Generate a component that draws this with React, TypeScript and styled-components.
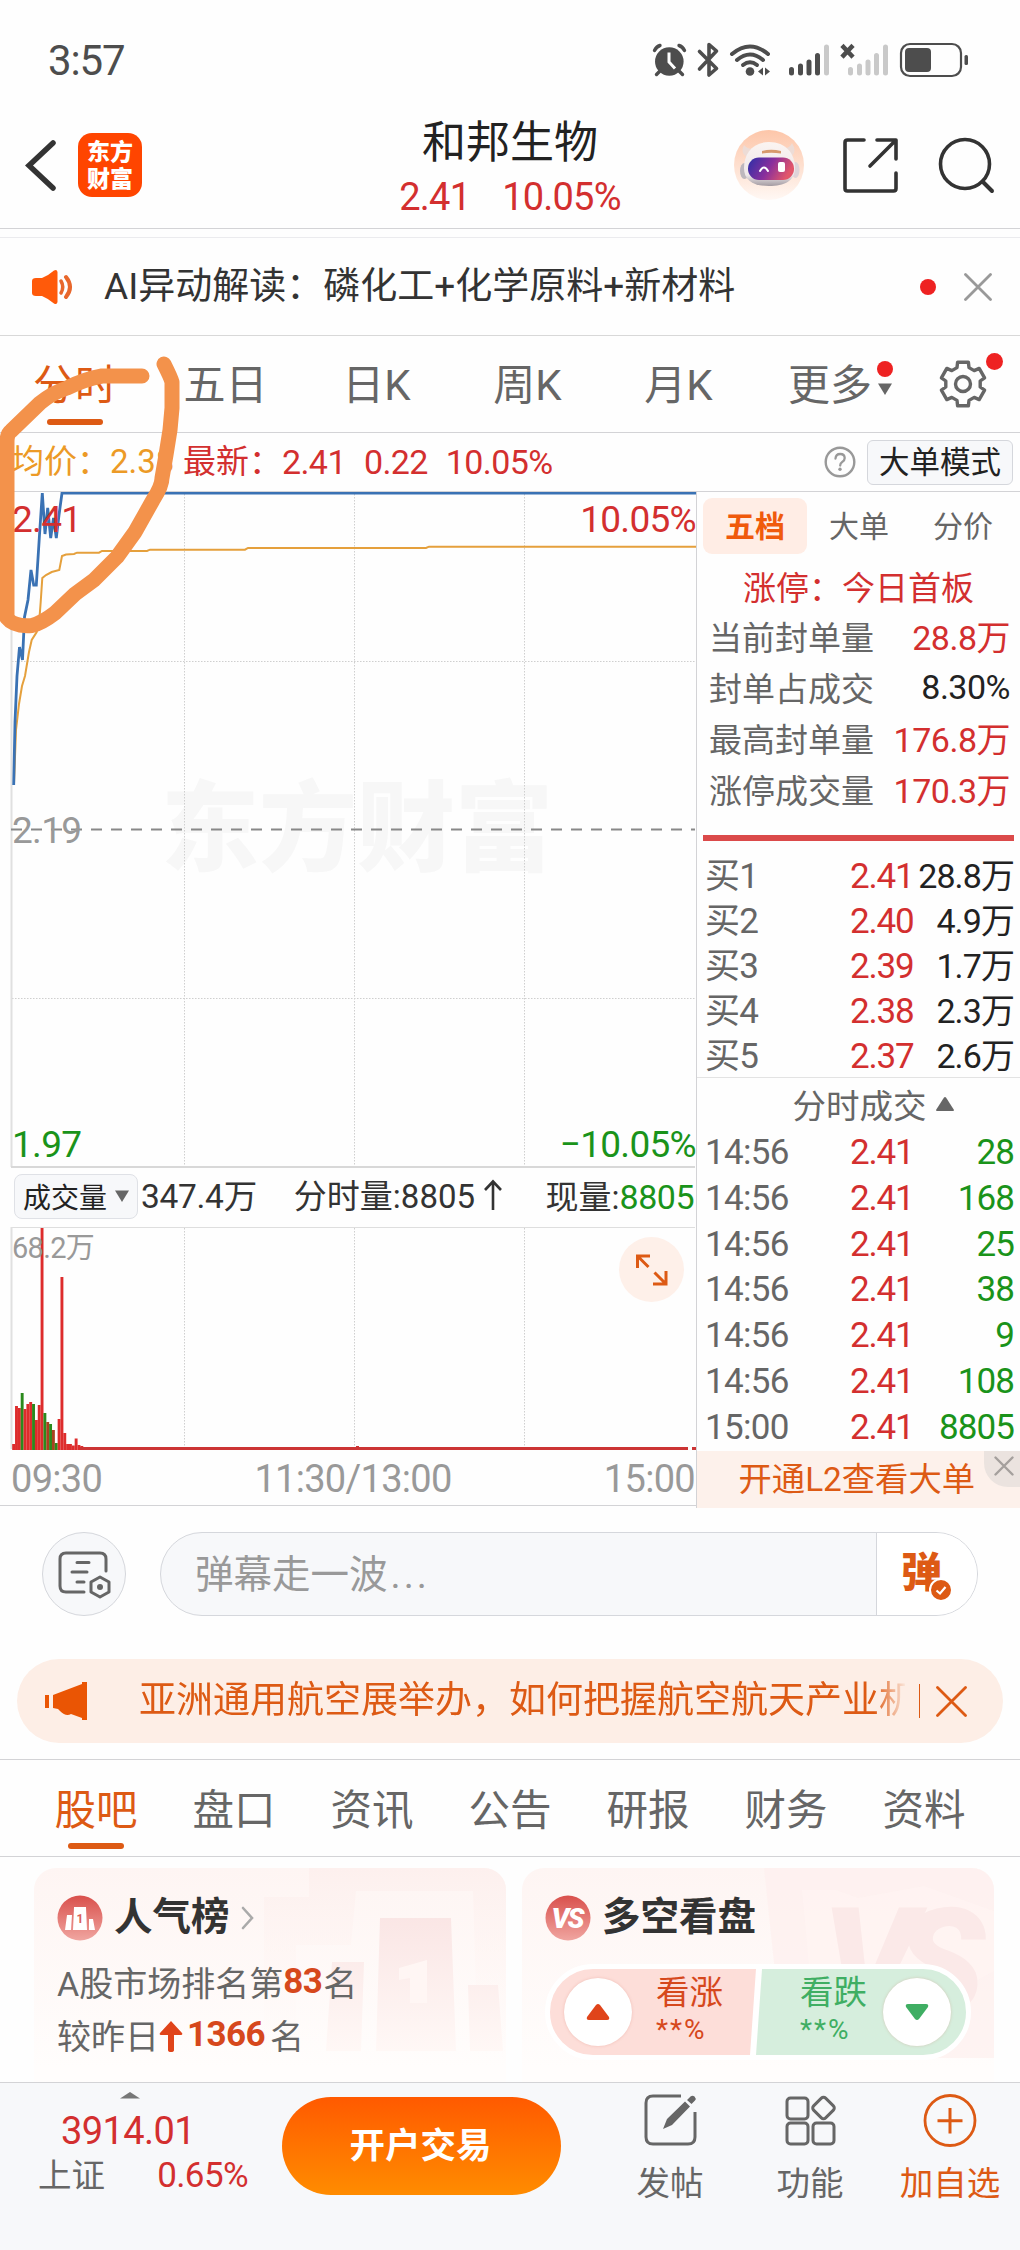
import React from "react";
import styled, { createGlobalStyle } from "styled-components";

const RED = "#d32f2f";
const GREEN = "#1a931a";
const GREY = "#666";
const ORANGE = "#dd5a14";

const Global = createGlobalStyle`
  *, *::before, *::after { box-sizing: border-box; }
  body { margin: 0; background: #fff; }
  body, button, input { font-family: Roboto, "Noto Sans CJK SC", sans-serif; }
  svg { display: block; flex: none; }
`;

const Screen = styled.div`
  width: 1020px;
  height: 2250px;
  display: flex;
  flex-direction: column;
  background: #fefefe;
  color: #333;
  overflow: hidden;
  position: relative;
  white-space: nowrap;
`;

const Txt = styled.span<{ $s: number; $c?: string; $w?: number; $ls?: number }>`
  font-size: ${(p) => p.$s}px;
  line-height: 1.2;
  color: ${(p) => p.$c ?? "inherit"};
  font-weight: ${(p) => p.$w ?? 400};
  letter-spacing: ${(p) => p.$ls ?? 0}px;
  white-space: pre;
`;

/* ---------- status bar ---------- */
const StatusBar = styled.div`
  height: 103px;
  padding: 19px 49px 0 48px;
  display: flex;
  align-items: center;
  justify-content: space-between;
`;
const StatusSvg = styled.svg`
  margin-right: -10px;
`;

const StatusIcons = () => (
  <StatusSvg width="330" height="40" viewBox="650 40 330 40">
    <g fill="#4d4d4d" stroke="none">
      <circle cx="668.3" cy="60.5" r="14.3" />
      <path d="M668 51.5v9.5l6 6.5" fill="none" stroke="#fff" strokeWidth="3" />
      <path
        d="M653.5 49.5q2-4 5.5-5M683.5 49.5q-2-4-5.5-5M659 70l-3.5 3.5M678 70l3.5 3.5"
        fill="none"
        stroke="#4d4d4d"
        strokeWidth="3.4"
        strokeLinecap="round"
      />
      <path d="M698.5 50.500l17 17-7.500 6.500V43.500l7.500 6.500-17 18" fill="none" stroke="#4d4d4d" strokeWidth="3.6" strokeLinejoin="round" strokeLinecap="round" />
      <g fill="none" stroke="#4d4d4d" strokeWidth="4" strokeLinecap="round">
        <path d="M731 53q18-15 36 0" />
        <path d="M736 59q13-11 26 0" />
        <path d="M742 64q7-5.500 14 0" />
      </g>
      <circle cx="749" cy="70.500" r="4.300" />
      <path d="M757 70.500l5-4v8zM769 70.500l-5-4v8z" />
      <g stroke="#4d4d4d" strokeWidth="5" strokeLinecap="round">
        <path d="M790.500 68.500v3.500M799.500 65v7M808 61v11M816.500 54.500v17.500" />
        <path stroke="#c9c9c9" d="M825.500 46v26M849.500 68.500v3.500M858.500 65v7M867 61v11M875.500 54.500v17.500M884.500 46v26" />
      </g>
      <path d="M842.500 46l8 8.500M850.500 46l-8 8.500" stroke="#4d4d4d" strokeWidth="4.500" strokeLinecap="square" />
      <rect x="900" y="43" width="60" height="32" rx="9" fill="none" stroke="#4d4d4d" strokeWidth="2.200" />
      <rect x="904" y="47" width="26" height="24" rx="4" />
      <rect x="963.500" y="54" width="3.500" height="10" rx="1.500" />
    </g>
  </StatusSvg>
);

/* ---------- header ---------- */
const Header = styled.header`
  height: 126px;
  border-bottom: 1px solid #d3d3d6;
  display: grid;
  grid-template-columns: 340px 1fr 340px;
`;
const HeaderLeft = styled.div`
  display: flex;
  align-items: flex-start;
  padding: 30px 0 0 25px;
  gap: 21px;
  & > svg { margin-top: 6px; }
`;
const Logo = styled.div`
  width: 64px;
  height: 64px;
  border-radius: 14px;
  background: #ff4500;
  color: #fff;
  font-weight: 900;
  font-size: 23px;
  line-height: 27px;
  text-align: center;
  padding: 6px 0 0;
  white-space: pre-line;
`;
const TitleBlock = styled.div`
  display: flex;
  flex-direction: column;
  align-items: center;
  padding-top: 13px;
  h1 { margin: 0; font-size: 44px; line-height: 54px; font-weight: 400; color: #222; }
`;
const Quote = styled.div`
  display: flex;
  gap: 32px;
  font-size: 38px;
  letter-spacing: -0.8px;
  line-height: 54px;
  color: ${RED};
`;
const HeaderRight = styled.div`
  display: flex;
  align-items: flex-start;
  justify-content: flex-end;
  padding: 26px 25px 0 0;
`;
const ShareIcon = styled.svg`
  margin: 8px 0 0 37px;
`;

const Robot = () => (
  <svg width="72" height="72" viewBox="0 0 72 72">
    <defs>
      <linearGradient id="av" x1="0" y1="0" x2="0" y2="1">
        <stop offset="0" stopColor="#fdc6a9" />
        <stop offset="1" stopColor="#fff8f4" />
      </linearGradient>
      <linearGradient id="vis" x1="0" y1="0" x2="1" y2="0.3">
        <stop offset="0" stopColor="#2b2fa8" />
        <stop offset="0.55" stopColor="#8a2f9c" />
        <stop offset="1" stopColor="#e2566a" />
      </linearGradient>
      <linearGradient id="helm" x1="0" y1="0" x2="0" y2="1">
        <stop offset="0" stopColor="#fbf4f1" />
        <stop offset="0.75" stopColor="#eee8ea" />
        <stop offset="1" stopColor="#a39ba2" />
      </linearGradient>
    </defs>
    <circle cx="36" cy="36" r="35" fill="url(#av)" />
    <ellipse cx="11.5" cy="42" rx="4.5" ry="8" fill="#bdb7bd" />
    <ellipse cx="62.5" cy="41" rx="4" ry="8" fill="#ded3d8" />
    <path d="M11 16q-4 8 3 12l6-8q-6 0-9-4zM59 14q5 8 0 13l-7-8q5 0 7-5z" fill="#eddcd6" />
    <path d="M36 13c17 0 26 12 26 26 0 13-11 18-26 18S11 52 11 39c0-14 8-26 25-26z" fill="url(#helm)" />
    <rect x="15" y="28.500" width="46" height="22.500" rx="11" fill="url(#vis)" />
    <path d="M29 22q9-2.500 19 0v2.500q-10-1.500-19 0z" fill="#d79a6d" />
    <path d="M27 42q4-7 8 0" stroke="#fff" strokeWidth="2" fill="none" strokeLinecap="round" />
    <rect x="45" y="33" width="7" height="10" rx="2" fill="#fff" />
  </svg>
);

/* ---------- AI notice ---------- */
const AiBar = styled.div`
  margin-top: 8px;
  height: 99px;
  border-top: 1px solid #ebebee;
  border-bottom: 1px solid #d8d8d8;
  display: flex;
  align-items: center;
  padding: 0 28px 0 31px;
`;
const AiText = styled.div`
  flex: 1;
  padding: 1px 0 0 30px;
  font-size: 37px;
  line-height: 46px;
`;
const RedDot = styled.i<{ $d: number; $mr?: number; $mt?: number }>`
  width: ${(p) => p.$d}px;
  height: ${(p) => p.$d}px;
  margin: ${(p) => p.$mt ?? 0}px ${(p) => p.$mr ?? 0}px 0 0;
  border-radius: 50%;
  background: #ee2222;
`;

/* ---------- period tabs ---------- */
const PeriodTabs = styled.nav`
  height: 97px;
  border-bottom: 1px solid #d3d3d6;
  display: flex;
  align-items: stretch;
  color: ${GREY};
  font-size: 42px;
`;
const PeriodTab = styled.div<{ $w: number; $on?: boolean }>`
  width: ${(p) => p.$w}px;
  display: flex;
  flex-direction: column;
  align-items: center;
  line-height: 56px;
  padding-top: 22px;
  color: ${(p) => (p.$on ? ORANGE : "inherit")};
  &::after {
    content: "";
    width: 56px;
    height: 6px;
    border-radius: 3px;
    margin-top: 5px;
    background: ${(p) => (p.$on ? ORANGE : "transparent")};
  }
`;
const MoreTab = styled.div`
  display: flex;
  padding: 22px 0 0 34px;
  line-height: 56px;
`;
const MoreMark = styled.div`
  display: flex;
  flex-direction: column;
  align-items: center;
  gap: 6px;
  margin: -3px 0 0 5px;
`;
const GearBox = styled.div`
  padding: 23px 0 0 45px;
  position: relative;
  & > i { position: absolute; top: 17px; right: -15px; }
`;

const gearPoints = () => {
  const pts: string[] = [];
  for (let k = 0; k < 6; k++) {
    const a = -90 + k * 60;
    const seq: [number, number][] = [
      [a - 20, 17.5],
      [a - 14, 22.5],
      [a + 14, 22.5],
      [a + 20, 17.5],
    ];
    seq.forEach(([d, r]) => {
      const t = (d * Math.PI) / 180;
      pts.push(`${(25 + r * Math.cos(t)).toFixed(1)},${(25 + r * Math.sin(t)).toFixed(1)}`);
    });
  }
  return pts.join(" ");
};

/* ---------- price line ---------- */
const InfoRow = styled.div`
  height: 59px;
  border-bottom: 1px solid #d3d3d6;
  display: flex;
  align-items: center;
  padding: 0 7px 0 11px;
  font-size: 33px;
  line-height: 50px;
`;
const AvgPrice = styled.div`
  width: 172px;
  color: #ec9a26;
`;
const Latest = styled.div`
  flex: 1;
  display: flex;
  gap: 18px;
  color: ${RED};
  font-size: 34px;
  letter-spacing: -0.6px;
  & > span:first-child { font-size: 33px; letter-spacing: 0; margin-right: -18px; width: 99px; }
`;
const ModeButton = styled.button`
  width: 146px;
  height: 45px;
  margin-left: 11px;
  padding: 0;
  border: 1px solid #d5d7dc;
  border-radius: 6px;
  background: #f7f8fa;
  color: #222;
  font-size: 30.5px;
  line-height: 43px;
`;

/* ---------- market area ---------- */
const Market = styled.section`
  height: 1014px;
  display: grid;
  grid-template-columns: 697px 323px;
  border-bottom: 1px solid #d3d3d6;
`;
const ChartColumn = styled.div`
  border-right: 1px solid #d3d3d6;
  display: flex;
  flex-direction: column;
`;
const ChartBox = styled.div<{ $h: number }>`
  position: relative;
  height: ${(p) => p.$h}px;
`;
const Layer = styled.svg`
  position: absolute;
  left: 0;
  top: 0;
`;
const Label = styled.span<{ $top: number; $c: string; $right?: boolean; $s?: number }>`
  position: absolute;
  top: ${(p) => p.$top}px;
  ${(p) => (p.$right ? "right: 0;" : "left: 12px;")}
  font-size: ${(p) => p.$s ?? 37}px;
  letter-spacing: -0.7px;
  line-height: 44px;
  color: ${(p) => p.$c};
`;
const Watermark = styled.span`
  position: absolute;
  left: 161px;
  top: 273px;
  font-size: 98px;
  line-height: 130px;
  font-weight: 900;
  color: #f7f7f7;
`;
const VolumeInfo = styled.div`
  height: 58px;
  display: flex;
  align-items: center;
  font-size: 33px;
  padding: 0 2px 0 14px;
  color: #333;
`;
const VolumePicker = styled.div`
  width: 124px;
  height: 45px;
  border: 1px solid #dfe1e6;
  border-radius: 8px;
  background: #f7f8fa;
  display: flex;
  align-items: center;
  padding: 0 8px 1px 8px;
  justify-content: space-between;
  font-size: 28px;
  color: #222;
  margin: 0 3px 2px 0;
`;
const MinuteVolume = styled.div`
  display: flex;
  align-items: center;
  gap: 8px;
  margin-left: 37px;
  & > svg { margin-bottom: 4px; }
`;
const LastVolume = styled.div`
  margin-left: auto;
`;
const TimeAxis = styled.div`
  flex: 1;
  display: flex;
  align-items: center;
  justify-content: space-between;
  padding: 0 1px 0 11px;
  font-size: 38px;
  letter-spacing: -0.7px;
  color: #999;
`;
const Expand = styled.div`
  position: absolute;
  left: 619px;
  top: 11px;
  width: 65px;
  height: 65px;
  border-radius: 50%;
  background: #fef0e9;
`;

const priceLine =
  "13.7,293 15,230 17,184 19.5,155 22.5,168 24.5,125 28,108 31,78 33.7,93 36.3,93 39.3,46 42.3,1 45,42 47.7,16 50.7,46 53.5,26 56.3,46 59,23 62,1 696,1";
const avgLine =
  "14,292 16,238 19,212 22,194 25,184 29,160 31.7,148 36.7,140 39.3,128 40.7,110 42.3,86 46,83 51.7,80 59.3,78 62,64 66,62.5 74,62 77,60.7 99,60.7 102,59 147,59 150,57.7 245,57.7 248,56 426,56 429,54.7 696,54.7";

const PriceChart = () => (
  <Layer width="696" height="676" viewBox="0 0 696 676">
    <g stroke="#cfcfcf" strokeWidth="1" strokeDasharray="1.5 1.5">
      <path d="M184.5 2v672M354.5 2v672M524.5 2v672M12 169.500h683M12 506.500h683" />
    </g>
    <path d="M11.500 1v674" stroke="#e0e0e0" strokeWidth="2" />
    <path d="M11 675h684" stroke="#d8d8d8" strokeWidth="2" />
    <path d="M11 337.500h684" stroke="#888" strokeWidth="2" strokeDasharray="11 9" />
  </Layer>
);
const PriceLines = () => (
  <Layer width="696" height="676" viewBox="0 0 696 676">
    <polyline points={avgLine} fill="none" stroke="#e5a03c" strokeWidth="2" />
    <polyline points={priceLine} fill="none" stroke="#3a72b4" strokeWidth="2.800" />
  </Layer>
);

const bars: [number, string][] = [
  [6, "r"], [44, "r"], [42, "r"], [57, "g"], [41, "r"], [46, "r"], [48, "r"], [46, "g"], [30, "r"], [45, "r"],
  [222, "r"], [37, "g"], [28, "b"], [26, "g"], [20, "b"], [7, "g"], [31, "r"], [173, "r"], [17, "r"], [6, "r"],
  [6, "r"], [4.5, "r"], [11.5, "r"], [5, "r"], [4, "r"],
];
const fill: Record<string, string> = { r: "#dd2c2c", g: "#2a8a1c", b: "#a8421f" };

const VolumeChart = () => (
  <Layer width="696" height="225" viewBox="0 0 696 225">
    <g stroke="#cfcfcf" strokeDasharray="1.5 1.5">
      <path d="M184.500 2v218M354.500 2v218M524.500 2v218" />
    </g>
    <path d="M11 1.500h684" stroke="#dedede" />
    <path d="M11.500 1v222" stroke="#e0e0e0" strokeWidth="2" />
    {bars.map(([h, c], i) => (
      <rect key={i} x={12.2 + i * 2.84} y={224 - h} width="2.9" height={h} fill={fill[c]} />
    ))}
    <path d="M80 222.500h608M692 222.500h4M356 221.500h3" stroke="#cc3434" strokeWidth="3" />
  </Layer>
);

/* ---------- order book ---------- */
const Book = styled.aside`
  display: flex;
  flex-direction: column;
`;
const BookTabs = styled.div`
  display: grid;
  grid-template-columns: 104px 104px 104px;
  padding: 6px 0 0 6px;
  height: 71px;
`;
const BookTab = styled.div<{ $on?: boolean }>`
  height: 56px;
  border-radius: 9px;
  font-size: 30px;
  line-height: 57px;
  text-align: center;
  background: ${(p) => (p.$on ? "#ffede5" : "none")};
  color: ${(p) => (p.$on ? "#f05a0c" : GREY)};
  font-weight: ${(p) => (p.$on ? 700 : 400)};
`;
const LimitTitle = styled.div`
  color: ${RED};
  font-size: 33px;
  line-height: 50px;
  padding: 1px 0 0 46px;
  margin-bottom: -4px;
`;
const StatRow = styled.div<{ $c: string }>`
  display: flex;
  justify-content: space-between;
  height: 51px;
  align-items: center;
  padding: 0 10px 0 12px;
  font-size: 33px;
  color: ${GREY};
  & > b { font-weight: 400; font-size: 34px; letter-spacing: -0.5px; color: ${(p) => p.$c}; }
`;
const Meter = styled.div`
  height: 6px;
  margin: 21px 6px 13px;
  background: #db4a4a;
`;
const BookRow = styled.div<{ $h: number; $c: string; $s?: number }>`
  display: grid;
  grid-template-columns: 145px 62px 1fr;
  height: ${(p) => p.$h}px;
  line-height: ${(p) => p.$h}px;
  padding: 0 6px 0 8px;
  font-size: 35px;
  letter-spacing: -0.7px;
  color: ${GREY};
  & > :nth-child(2) { color: ${RED}; letter-spacing: -1.2px; }
  & > :nth-child(3) {
    color: ${(p) => p.$c};
    font-size: ${(p) => p.$s ?? 35}px;
    letter-spacing: -0.9px;
    text-align: right;
  }
`;
const TradesHead = styled.div`
  margin-top: -2px;
  height: 53px;
  border-top: 1px solid #e3e3e3;
  display: flex;
  justify-content: center;
  align-items: center;
  gap: 8px;
  padding: 0 0 1px 30px;
  font-size: 33.5px;
  color: ${GREY};
`;
const L2Banner = styled.div`
  flex: 1;
  background: #fdf1eb;
  color: ${ORANGE};
  font-size: 33.3px;
  line-height: 57px;
  display: flex;
  justify-content: flex-end;
`;
const L2Close = styled.div`
  width: 36px;
  height: 36px;
  margin-left: 9px;
  background: #ebe3df;
  border-bottom-left-radius: 24px;
  padding: 5px 0 0 10px;
`;

const Cross = ({ s, c, w }: { s: number; c: string; w: number }) => (
  <svg width={s} height={s} viewBox={`0 0 ${s} ${s}`}>
    <path d={`M1.5 1.5L${s - 1.5} ${s - 1.5}M${s - 1.5} 1.5L1.5 ${s - 1.5}`} stroke={c} strokeWidth={w} strokeLinecap="round" />
  </svg>
);

/* ---------- comment input ---------- */
const DanmuRow = styled.div`
  height: 153px;
  padding: 26px 42px 0;
  display: flex;
  gap: 34px;
`;
const RoundButton = styled.div`
  width: 84px;
  height: 84px;
  border-radius: 50%;
  border: 1px solid #d5d7dc;
  background: #f7f8fa;
  display: flex;
  align-items: center;
  justify-content: center;
`;
const DanmuInput = styled.div`
  flex: 1;
  height: 84px;
  border: 1.5px solid #d5d7dc;
  border-radius: 42px;
  background: #f7f8fa;
  display: flex;
  overflow: hidden;
  color: #999;
  font-size: 38.5px;
  line-height: 84px;
`;
const Placeholder = styled.span`
  flex: 1;
  padding-left: 34px;
  & > i { font-style: normal; letter-spacing: 3px; padding-left: 3px; }
`;
const DanmuSwitch = styled.div`
  width: 101px;
  border-left: 1px solid #d5d7dc;
  background: #fff;
  color: ${ORANGE};
  font-weight: 900;
  font-size: 41px;
  line-height: 80px;
  padding-left: 24px;
  position: relative;
  & > svg { position: absolute; left: 52px; top: 45px; }
`;

/* ---------- ad notice ---------- */
const Notice = styled.div`
  height: 84px;
  margin: 0 17px 16px;
  border-radius: 42px;
  background: #fdeee6;
  display: flex;
  align-items: center;
  padding: 0 36px 0 27px;
`;
const NoticeText = styled.div`
  width: 767px;
  margin-left: 51px;
  overflow: hidden;
  font-size: 37px;
  line-height: 60px;
  color: ${ORANGE};
  mask-image: linear-gradient(90deg, #000 735px, transparent 768px);
`;
const NoticeBar = styled.i`
  width: 1.5px;
  height: 34px;
  background: ${ORANGE};
  margin: 0 16px 0 14px;
`;

/* ---------- section tabs ---------- */
const SectionTabs = styled.nav`
  height: 98px;
  border-top: 1px solid #d3d3d6;
  border-bottom: 1px solid #d3d3d6;
  display: grid;
  grid-template-columns: repeat(7, 138px);
  padding-left: 27px;
`;
const SectionTab = styled(PeriodTab)`
  width: auto;
  font-size: 41.5px;
  color: ${(p) => (p.$on ? ORANGE : GREY)};
  padding-top: 23px;
  &::after { margin-top: 4px; }
`;

/* ---------- cards ---------- */
const Cards = styled.section`
  height: 225px;
  padding: 11px 26px 0 34px;
  display: grid;
  grid-template-columns: 472px 472px;
  gap: 16px;
  overflow: hidden;
`;
const Card = styled.article`
  position: relative;
  height: 250px;
  border-radius: 22px;
  background: linear-gradient(180deg, #fef5f3, #fffdfc 80%);
  overflow: hidden;
  padding: 26px 0 0 23px;
`;
const CardArt = styled.svg`
  position: absolute;
  right: 0;
  top: 0;
`;
const CardTitle = styled.div`
  position: relative;
  display: flex;
  align-items: center;
  height: 48px;
  font-size: 38.5px;
  font-weight: 600;
  color: #333;
  gap: 11px;
  & > span { line-height: 44px; margin-top: -3px; }
`;
const CardLine = styled.div<{ $mt: number }>`
  position: relative;
  display: flex;
  align-items: center;
  margin-top: ${(p) => p.$mt}px;
  height: 42px;
  font-size: 34px;
  color: ${GREY};
  & > svg { margin: 6px 4px 0 0; }
`;
const Rank = styled.b<{ $mr?: number }>`
  color: #d6481c;
  font-size: 35px;
  font-weight: 700;
  letter-spacing: -0.6px;
  margin-right: ${(p) => p.$mr ?? 0}px;
`;
const VotePill = styled.div`
  position: relative;
  width: 426px;
  height: 96px;
  margin: 22px 0 0 0;
  border: 5px solid #fff;
  border-radius: 48px;
  background: linear-gradient(94deg, #fdded9 0 205px, #fff 206px 211px, #d6eedd 212px);
  display: grid;
  grid-template-columns: 68px 130px 121px 68px;
  column-gap: 0;
  padding: 9px 0 0 14px;
`;
const VoteText = styled.div<{ $c: string; $ml: number }>`
  display: flex;
  flex-direction: column;
  margin: -5px 0 0 ${(p) => p.$ml}px;
  color: ${(p) => p.$c};
  font-size: 33.5px;
  line-height: 39px;
  & > small { font-size: 28px; line-height: 36px; letter-spacing: 2px; }
`;
const VoteDisc = styled.div`
  width: 68px;
  height: 68px;
  border-radius: 50%;
  background: #fff;
  box-shadow: 0 0 3px rgba(200, 90, 70, 0.25);
  display: flex;
  align-items: center;
  justify-content: center;
`;

/* ---------- bottom bar ---------- */
const BottomBar = styled.footer`
  flex: 1;
  border-top: 1px solid #d3d3d6;
  background: #f7f8fa;
  display: flex;
`;
const IndexBox = styled.div`
  width: 282px;
  padding: 8px 34px 0 38px;
  display: flex;
  flex-direction: column;
  color: ${RED};
  & > svg { margin-left: 82px; }
`;
const IndexValue = styled.div`
  font-size: 38px;
  letter-spacing: -0.6px;
  line-height: 44px;
  margin: 10px 0 0 23px;
`;
const IndexRow = styled.div`
  display: flex;
  justify-content: space-between;
  line-height: 46px;
  font-size: 35px;
  letter-spacing: -0.6px;
  & > span:first-child { color: ${GREY}; font-size: 33.5px; letter-spacing: 0; }
`;
const TradeButton = styled.button`
  width: 279px;
  height: 98px;
  margin-top: 14px;
  border: 0;
  border-radius: 49px;
  background: linear-gradient(180deg, #ff5a00, #ff8c00);
  color: #fff;
  font-size: 35.5px;
  font-weight: 600;
  line-height: 97px;
  padding: 0 2px 0 0;
`;
const Action = styled.div<{ $w: number; $c?: string; $ml?: number }>`
  width: ${(p) => p.$w}px;
  margin-left: ${(p) => p.$ml ?? 0}px;
  display: flex;
  flex-direction: column;
  align-items: center;
  padding-top: 10px;
  font-size: 33.5px;
  line-height: 44px;
  color: ${(p) => p.$c ?? GREY};
  & > svg { margin-bottom: 15px; }
`;

const Annotation = styled.svg`
  position: absolute;
  left: 0;
  top: 340px;
  pointer-events: none;
`;

const stats: [string, string, string][] = [
  ["当前封单量", "28.8万", RED],
  ["封单占成交", "8.30%", "#222"],
  ["最高封单量", "176.8万", RED],
  ["涨停成交量", "170.3万", RED],
];
const bids = [
  ["买1", "2.41", "28.8万"],
  ["买2", "2.40", "4.9万"],
  ["买3", "2.39", "1.7万"],
  ["买4", "2.38", "2.3万"],
  ["买5", "2.37", "2.6万"],
];
const trades = [
  ["14:56", "28"],
  ["14:56", "168"],
  ["14:56", "25"],
  ["14:56", "38"],
  ["14:56", "9"],
  ["14:56", "108"],
  ["15:00", "8805"],
];
const sections = ["股吧", "盘口", "资讯", "公告", "研报", "财务", "资料"];

export default function App() {
  return (
    <Screen>
      <Global />
      <StatusBar>
        <Txt $s={42} $c="#4d4d4d" $ls={-1.1}>3:57</Txt>
        <StatusIcons />
      </StatusBar>

      <Header>
        <HeaderLeft>
          <svg width="32" height="54" viewBox="0 0 32 54">
            <path d="M28 4L4 26.5 28 49" fill="none" stroke="#333" strokeWidth="5.5" strokeLinecap="round" />
          </svg>
          <Logo>{"东方\n财富"}</Logo>
        </HeaderLeft>
        <TitleBlock>
          <h1>和邦生物</h1>
          <Quote>
            <span>2.41</span>
            <span>10.05%</span>
          </Quote>
        </TitleBlock>
        <HeaderRight>
          <Robot />
          <ShareIcon width="58" height="58" viewBox="0 0 58 58">
            <g fill="none" stroke="#333" strokeWidth="3.6" strokeLinecap="round" strokeLinejoin="round">
              <path d="M22 3H5.500Q3 3 3 5.500v46Q3 54 5.500 54h46q2.500 0 2.500-2.500V36" />
              <path d="M35 3h19v19M53 4L28 29" />
            </g>
          </ShareIcon>
          <ShareIcon width="58" height="58" viewBox="0 0 58 58">
            <circle cx="28" cy="27" r="24.5" fill="none" stroke="#333" strokeWidth="3.6" />
            <path d="M45.500 44.500L55 54" stroke="#333" strokeWidth="4" strokeLinecap="round" />
          </ShareIcon>
        </HeaderRight>
      </Header>

      <AiBar>
        <svg width="43" height="36" viewBox="0 0 43 36">
          <path d="M1 12q0-3 4-3h6Q18 6 23 1.500q3-1.500 3.500 1.500v30q-.5 3-3.500 1.500Q18 30 11 27H5q-4 0-4-3z" fill="#ff5a0a" />
          <path d="M30 12q3.500 6 0 12" fill="none" stroke="#e8672c" strokeWidth="3.5" strokeLinecap="round" />
          <path d="M35 8q8 10 0 20" fill="none" stroke="#e8672c" strokeWidth="4" strokeLinecap="round" />
        </svg>
        <AiText>AI异动解读：磷化工+化学原料+新材料</AiText>
        <RedDot $d={16} $mr={28} />
        <Cross s={28} c="#999" w={2.8} />
      </AiBar>

      <PeriodTabs>
        <PeriodTab $w={150} $on>分时</PeriodTab>
        <PeriodTab $w={151}>五日</PeriodTab>
        <PeriodTab $w={151}>日K</PeriodTab>
        <PeriodTab $w={151}>周K</PeriodTab>
        <PeriodTab $w={151}>月K</PeriodTab>
        <MoreTab>
          更多
          <MoreMark>
            <RedDot $d={16} $mt={6} />
            <svg width="14" height="12" viewBox="0 0 14 12"><path d="M0 .5h14L7 12z" fill={GREY} /></svg>
          </MoreMark>
        </MoreTab>
        <GearBox>
          <svg width="50" height="50" viewBox="0 0 50 50">
            <polygon points={gearPoints()} fill="none" stroke={GREY} strokeWidth="3.4" strokeLinejoin="round" />
            <circle cx="25" cy="25" r="7.5" fill="none" stroke={GREY} strokeWidth="3.4" />
          </svg>
          <RedDot $d={17} />
        </GearBox>
      </PeriodTabs>

      <InfoRow>
        <AvgPrice>均价：2.38</AvgPrice>
        <Latest>
          <span>最新：</span>
          <span>2.41</span>
          <span>0.22</span>
          <span>10.05%</span>
        </Latest>
        <svg width="32" height="32" viewBox="0 0 32 32">
          <circle cx="16" cy="16" r="14.3" fill="none" stroke="#999" strokeWidth="2.4" />
          <path d="M11.500 12.500q.3-4.500 4.700-4.500t4.500 4q0 2.500-2.500 4-2 1.200-2 3.500" fill="none" stroke="#999" strokeWidth="2.3" strokeLinecap="round" />
          <circle cx="16" cy="23.300" r="1.700" fill="#999" />
        </svg>
        <ModeButton>大单模式</ModeButton>
      </InfoRow>

      <Market>
        <ChartColumn>
          <ChartBox $h={676}>
            <Watermark>东方财富</Watermark>
            <PriceChart />
            <PriceLines />
            <Label $top={6} $c={RED}>2.41</Label>
            <Label $top={6} $c={RED} $right>10.05%</Label>
            <Label $top={317} $c="#999">2.19</Label>
            <Label $top={631} $c={GREEN}>1.97</Label>
            <Label $top={631} $c={GREEN} $right>−10.05%</Label>
          </ChartBox>
          <VolumeInfo>
            <VolumePicker>
              成交量
              <svg width="14" height="12" viewBox="0 0 14 12"><path d="M0 .5h14L7 12z" fill={GREY} /></svg>
            </VolumePicker>
            <Txt $s={33.5} $ls={-0.3}>347.4万</Txt>
            <MinuteVolume>
              <Txt $s={33}>分时量:8805</Txt>
              <svg width="20" height="32" viewBox="0 0 20 32">
                <path d="M10 31V2.500M2 11l8-8.500 8 8.500" fill="none" stroke="#333" strokeWidth="2.6" />
              </svg>
            </MinuteVolume>
            <LastVolume>
              <Txt $s={33}>现量:</Txt>
              <Txt $s={34} $c={GREEN} $ls={-0.5}>8805</Txt>
            </LastVolume>
          </VolumeInfo>
          <ChartBox $h={225}>
            <VolumeChart />
            <Label $top={0} $c="#999" $s={29}>68.2万</Label>
            <Expand>
              <svg width="65" height="65" viewBox="0 0 65 65">
                <path d="M18.500 31V19H31M19 19.500L29.500 30M47 34v13H34M46.500 46.500L35.500 35.500" fill="none" stroke={ORANGE} strokeWidth="3" />
              </svg>
            </Expand>
          </ChartBox>
          <TimeAxis>
            <span>09:30</span>
            <span>11:30/13:00</span>
            <span>15:00</span>
          </TimeAxis>
        </ChartColumn>

        <Book>
          <BookTabs>
            <BookTab $on>五档</BookTab>
            <BookTab>大单</BookTab>
            <BookTab>分价</BookTab>
          </BookTabs>
          <LimitTitle>涨停：今日首板</LimitTitle>
          {stats.map(([k, v, c]) => (
            <StatRow key={k} $c={c}>
              {k}
              <b>{v}</b>
            </StatRow>
          ))}
          <Meter />
          {bids.map(([k, p, v]) => (
            <BookRow key={k} $h={45} $c="#222" $s={34}>
              <span>{k}</span>
              <span>{p}</span>
              <span>{v}</span>
            </BookRow>
          ))}
          <TradesHead>
            分时成交
            <svg width="20" height="16" viewBox="0 0 20 16"><path d="M1 14L9 1.500q1-1 2 0L19 14q0 1-1 1H2q-1 0-1-1z" fill={GREY} /></svg>
          </TradesHead>
          {trades.map(([t, v], i) => (
            <BookRow key={i} $h={45.8} $c={GREEN}>
              <span>{t}</span>
              <span>2.41</span>
              <span>{v}</span>
            </BookRow>
          ))}
          <L2Banner>
            开通L2查看大单
            <L2Close><Cross s={20} c="#a5a09d" w={2.4} /></L2Close>
          </L2Banner>
        </Book>
      </Market>

      <DanmuRow>
        <RoundButton>
          <svg width="54" height="50" viewBox="0 0 54 50">
            <g fill="none" stroke={GREY} strokeWidth="3" strokeLinecap="round">
              <path d="M49 22V10q0-6-6-6H9Q3 4 3 10v27q0 6 6 6h18" />
              <path d="M20 13.500h12M15 23h15M20 33h7" />
              <path d="M43 28l9 5v10l-9 5-9-5V33z" strokeLinejoin="round" />
            </g>
            <circle cx="43" cy="38" r="3" fill={GREY} />
          </svg>
        </RoundButton>
        <DanmuInput>
          <Placeholder>弹幕走一波<i>...</i></Placeholder>
          <DanmuSwitch>
            弹
            <svg width="24" height="24" viewBox="0 0 24 24">
              <circle cx="12" cy="12" r="11" fill={ORANGE} stroke="#fff" strokeWidth="2" />
              <path d="M7.500 12.500l3.500 3 5.500-6.500" fill="none" stroke="#fff" strokeWidth="2.2" />
            </svg>
          </DanmuSwitch>
        </DanmuInput>
      </DanmuRow>

      <Notice>
        <svg width="44" height="38" viewBox="0 0 44 38">
          <path d="M1 13h4v13H1zM9 13L38 2V0h5v38h-5v-2l-11-4q-5 3-11-3l-2-2-5-1z" fill="#ea5504" />
        </svg>
        <NoticeText>亚洲通用航空展举办，如何把握航空航天产业机</NoticeText>
        <NoticeBar />
        <Cross s={31} c={ORANGE} w={2.8} />
      </Notice>

      <SectionTabs>
        {sections.map((s, i) => (
          <SectionTab key={s} $w={138} $on={i === 0}>{s}</SectionTab>
        ))}
      </SectionTabs>

      <Cards>
        <Card>
          <CardArt width="260" height="215" viewBox="0 0 260 215">
            <defs>
              <linearGradient id="pod" x1="0" y1="0" x2="0" y2="1">
                <stop offset="0" stopColor="#fae6e5" />
                <stop offset="1" stopColor="#fff8f6" />
              </linearGradient>
              <linearGradient id="pod2" x1="0" y1="0" x2="0" y2="1">
                <stop offset="0" stopColor="#fdf0ee" />
                <stop offset="1" stopColor="#fffaf8" stopOpacity="0" />
              </linearGradient>
            </defs>
            <path d="M18 29h45V0h197v190h-28L227 23H110l-5 54H50v113H18z" fill="url(#pod2)" />
            <path d="M134 50h71l5 133h-80zM86 94h32l-3 89H80zM222 117h30l5 66h-33z" fill="url(#pod)" />
            <path d="M153 100l28-8v43h-17v-25l-11 2z" fill="#fff6f4" />
          </CardArt>
          <CardTitle>
            <svg width="46" height="46" viewBox="0 0 46 46">
              <defs>
                <linearGradient id="dot" x1="0" y1="0" x2="0" y2="1">
                  <stop offset="0" stopColor="#d9504c" />
                  <stop offset="1" stopColor="#f0a5a0" />
                </linearGradient>
              </defs>
              <circle cx="23" cy="23" r="22.500" fill="url(#dot)" />
              <path d="M17 12h12l1 23H16zM10 20h5l-1 15H8zM32 24h4l2 11h-6z" fill="#fff" />
              <text x="23" y="28" textAnchor="middle" fontSize="12" fontWeight="700" fill="#d9605c">1</text>
            </svg>
            <span>人气榜</span>
            <svg width="14" height="24" viewBox="0 0 14 24"><path d="M2 2l9 10-9 10" fill="none" stroke="#aaa" strokeWidth="2.6" strokeLinecap="round" /></svg>
          </CardTitle>
          <CardLine $mt={18}>
            A股市场排名第<Rank $mr={1}>83</Rank>名
          </CardLine>
          <CardLine $mt={11}>
            较昨日
            <svg width="24" height="32" viewBox="0 0 24 32">
              <path d="M12 0l11 12q1 2-1 2h-7v15q0 2-3 2t-3-2V14H2q-2 0-1-2z" fill="#e0441a" />
            </svg>
            <Rank $mr={5}>1366</Rank>名
          </CardLine>
        </Card>

        <Card>
          <CardArt width="230" height="215" viewBox="0 0 230 215">
            <path d="M0 0h230v190H20z" fill="#fdf0ee" opacity="0.700" />
            <path d="M38 22h34l22 8 66-12 70 25v60l-90 50H50z" fill="#fff5f3" opacity="0.600" />
            <text x="58" y="145" fontSize="148" letterSpacing="-22" fontWeight="900" fontStyle="italic" fill="#fbe9e8">VS</text>
          </CardArt>
          <CardTitle>
            <svg width="46" height="46" viewBox="0 0 46 46">
              <circle cx="23" cy="23" r="22.500" fill="url(#dot)" />
              <text x="22" y="33" textAnchor="middle" fontSize="28" letterSpacing="-2" fontWeight="900" fontStyle="italic" fill="#fff">VS</text>
            </svg>
            <span>多空看盘</span>
          </CardTitle>
          <VotePill>
            <VoteDisc>
              <svg width="24" height="18" viewBox="0 0 24 18"><path d="M1 14L10 2q2-2 4 0l9 12q1 3-2 3H3q-3 0-2-3z" fill="#e0441a" /></svg>
            </VoteDisc>
            <VoteText $c="#d6481c" $ml={24}>看涨<small>**%</small></VoteText>
            <VoteText $c="#3fae63" $ml={38}>看跌<small>**%</small></VoteText>
            <VoteDisc>
              <svg width="24" height="18" viewBox="0 0 24 18"><path d="M1 4l9 12q2 2 4 0l9-12q1-3-2-3H3Q0 1 1 4z" fill="#3fae63" /></svg>
            </VoteDisc>
          </VotePill>
        </Card>
      </Cards>

      <BottomBar>
        <IndexBox>
          <svg width="20" height="8" viewBox="0 0 20 8"><path d="M0 7.500L10 1l10 6.500z" fill="#777" /></svg>
          <IndexValue>3914.01</IndexValue>
          <IndexRow>
            <span>上证</span>
            <span>0.65%</span>
          </IndexRow>
        </IndexBox>
        <TradeButton>开户交易</TradeButton>
        <Action $w={100} $ml={59}>
          <svg width="54" height="54" viewBox="0 0 54 54">
            <path d="M38 3H10Q3 3 3 10v34q0 7 7 7h35q7 0 7-7V19" fill="none" stroke={GREY} strokeWidth="3" />
            <path d="M20 36l4-10L42 8.500l5 5L29 32zM44 7l3.500-3.500q2-1.500 4 0 2 2 .5 4L48.500 11z" fill={GREY} />
          </svg>
          发帖
        </Action>
        <Action $w={100} $ml={40}>
          <svg width="54" height="54" viewBox="0 0 54 54">
            <g fill="none" stroke={GREY} strokeWidth="3">
              <rect x="4" y="5" width="21" height="21" rx="3.5" />
              <rect x="4" y="30" width="21" height="21" rx="3.5" />
              <rect x="30" y="30" width="21" height="21" rx="3.5" />
              <rect x="32" y="6.500" width="17" height="17" rx="3" transform="rotate(45 40.5 15)" />
            </g>
          </svg>
          功能
        </Action>
        <Action $w={120} $ml={30} $c={ORANGE}>
          <svg width="54" height="54" viewBox="0 0 54 54">
            <circle cx="27" cy="27.500" r="25" fill="none" stroke={ORANGE} strokeWidth="2.8" />
            <path d="M27 15v25.500M14.500 27.700h25" stroke={ORANGE} strokeWidth="3" />
          </svg>
          加自选
        </Action>
      </BottomBar>

      <Annotation width="200" height="310" viewBox="0 340 200 310">
        <path
          d="M142 376H102Q85 379 67 388 52 393 40 403L11 431Q7 434 7 442V618Q14 627 32 625.500 42 623 55 613L75 594 94 580 117 557 135 532 153 500Q162 486 162 478L166 455 170 430 172 408V382Q171 378 164 364"
          fill="none"
          stroke="#f3924b"
          strokeWidth="15"
          strokeLinecap="round"
          strokeLinejoin="round"
        />
      </Annotation>
    </Screen>
  );
}
